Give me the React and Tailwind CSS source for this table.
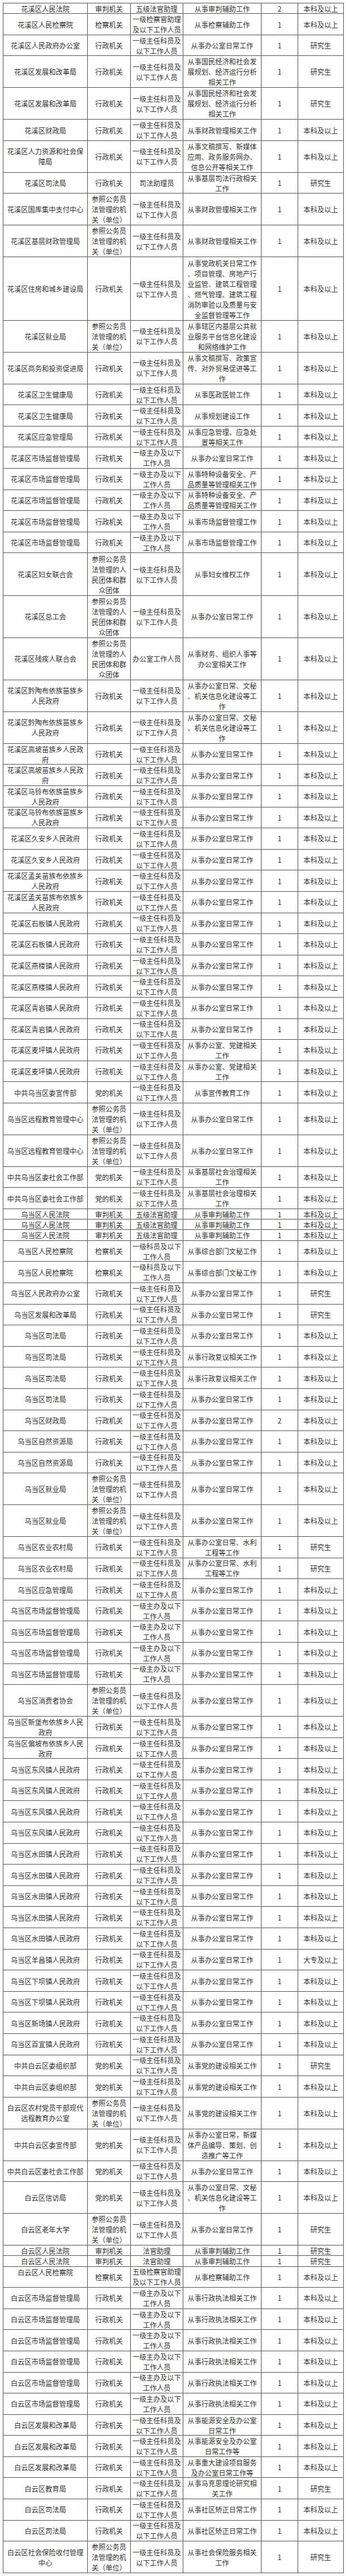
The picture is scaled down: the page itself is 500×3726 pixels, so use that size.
const A = '一级主任科员及|以下工作人员';
const B = '一级主办及以下|工作人员';
const P = '参照公务员|法管理的机|关（单位）';
const Q = '参照公务员|法管理的人|民团体和群|众团体';
const X = '行政机关';
const D = '党的机关';
const BK = '本科及以上';
const YJ = '研究生';
const BG = '从事办公室日常工作';

const rep = (n, row) => Array.from({ length: n }, () => row);

const rows = [
  ['花溪区人民法院', '审判机关', '五级法官助理', '从事审判辅助工作', '2', BK],
  ['花溪区人民检察院', '检察机关', '一级检察官助理|及以下工作人员', '从事检察辅助工作', '1', BK],
  ['花溪区人民政府办公室', X, A, BG, '1', YJ],
  ...rep(2, ['花溪区发展和改革局', X, A, '从事国民经济和社会发|展规划、经济运行分析|相关工作', '1', YJ]),
  ['花溪区财政局', X, A, '从事财政管理相关工作', '1', BK],
  ['花溪区人力资源和社会保|障局', X, A, '从事文稿撰写、新媒体|应用、政务服务网办、|信息公开等相关工作', '1', BK],
  ['花溪区司法局', X, '司法助理员', '从事基层司法行政相关|工作', '1', YJ],
  ['花溪区国库集中支付中心', P, A, '从事财政管理相关工作', '1', BK],
  ['花溪区基层财政管理局', P, A, '从事财政管理相关工作', '1', BK],
  ['花溪区住房和城乡建设局', X, A, '从事党政机关日常工作|、项目管理、房地产行|业监管、建筑工程管理|、燃气管理、建筑工程|消防审验以及质量与安|全监督管理等工作', '1', BK],
  ['花溪区就业局', P, A, '从事辖区内基层公共就|业服务平台信息化建设|和网络维护工作', '1', BK],
  ['花溪区商务和投资促进局', X, A, '从事文稿撰写、政策宣|传、对外贸易促进等工|作', '1', BK],
  ['花溪区卫生健康局', X, A, '从事医政医管工作', '1', BK],
  ['花溪区卫生健康局', X, A, '从事规划建设工作', '1', BK],
  ['花溪区应急管理局', X, A, '从事应急管理、应急处|置等相关工作', '1', BK],
  ['花溪区市场监督管理局', X, B, BG, '1', BK],
  ...rep(2, ['花溪区市场监督管理局', X, B, '从事特种设备安全、产|品质量等管理相关工作', '1', BK]),
  ...rep(2, ['花溪区市场监督管理局', X, B, '从事市场监督管理工作', '1', BK]),
  ['花溪区妇女联合会', Q, A, '从事妇女维权工作', '1', BK],
  ['花溪区总工会', Q, A, BG, '1', BK],
  ['花溪区残疾人联合会', Q, '办公室工作人员', '从事财务、组织人事等|办公室相关工作', '1', BK],
  ...rep(2, ['花溪区黔陶布依族苗族乡|人民政府', X, A, '从事办公室日常、文秘|、机关信息化建设等工|作', '1', BK]),
  ...rep(2, ['花溪区高坡苗族乡人民政|府', X, A, BG, '1', BK]),
  ...rep(2, ['花溪区马铃布依族苗族乡|人民政府', X, A, BG, '1', BK]),
  ...rep(2, ['花溪区久安乡人民政府', X, A, BG, '1', BK]),
  ...rep(2, ['花溪区孟关苗族布依族乡|人民政府', X, A, BG, '1', BK]),
  ...rep(2, ['花溪区石板镇人民政府', X, A, BG, '1', BK]),
  ...rep(2, ['花溪区燕楼镇人民政府', X, A, BG, '1', BK]),
  ...rep(2, ['花溪区青岩镇人民政府', X, A, BG, '1', BK]),
  ...rep(2, ['花溪区麦坪镇人民政府', X, A, '从事办公室、党建相关|工作', '1', BK]),
  ['中共乌当区委宣传部', D, A, '从事宣传教育工作', '1', BK],
  ...rep(2, ['乌当区远程教育管理中心', P, A, BG, '1', BK]),
  ...rep(2, ['中共乌当区委社会工作部', D, A, '从事基层社会治理相关|工作', '1', BK]),
  ...rep(3, ['乌当区人民法院', '审判机关', '五级法官助理', '从事审判辅助工作', '1', BK]),
  ...rep(2, ['乌当区人民检察院', '检察机关', '一级科员及以下|工作人员', '从事综合部门文秘工作', '1', BK]),
  ['乌当区人民政府办公室', X, A, BG, '1', YJ],
  ['乌当区发展和改革局', X, A, BG, '1', YJ],
  ['乌当区司法局', X, A, BG, '1', BK],
  ...rep(2, ['乌当区司法局', X, A, '从事行政复议相关工作', '1', BK]),
  ['乌当区司法局', X, A, BG, '1', BK],
  ['乌当区财政局', X, A, BG, '2', BK],
  ...rep(2, ['乌当区自然资源局', X, A, BG, '1', BK]),
  ...rep(2, ['乌当区就业局', P, A, BG, '1', BK]),
  ...rep(2, ['乌当区农业农村局', X, A, '从事办公室日常、水利|工程等工作', '1', YJ]),
  ['乌当区应急管理局', X, A, BG, '1', BK],
  ...rep(4, ['乌当区市场监督管理局', X, B, BG, '1', BK]),
  ['乌当区消费者协会', P, A, BG, '1', BK],
  ['乌当区新堡布依族乡人民|政府', X, A, BG, '1', BK],
  ['乌当区偏坡布依族乡人民|政府', X, A, BG, '1', BK],
  ...rep(4, ['乌当区东风镇人民政府', X, A, BG, '1', BK]),
  ...rep(5, ['乌当区水田镇人民政府', X, A, BG, '1', BK]),
  ['乌当区羊昌镇人民政府', X, A, BG, '1', '大专及以上'],
  ...rep(2, ['乌当区下坝镇人民政府', X, A, BG, '1', BK]),
  ['乌当区新场镇人民政府', X, A, BG, '1', BK],
  ['乌当区百宜镇人民政府', X, A, BG, '1', BK],
  ['中共白云区委组织部', D, A, '从事党的建设相关工作', '1', YJ],
  ['中共白云区委组织部', D, A, '从事党的建设相关工作', '1', BK],
  ['白云区农村党员干部现代|远程教育办公室', P, A, '从事党的建设相关工作', '1', BK],
  ['中共白云区委宣传部', D, A, '从事办公室日常，新媒|体产品编导、策划、创|造推广等工作', '1', BK],
  ['中共白云区委社会工作部', D, A, BG, '1', BK],
  ['白云区信访局', D, A, '从事办公室日常、文秘|、机关信息化建设等工|作', '1', BK],
  ['白云区老年大学', P, A, BG, '1', YJ],
  ...rep(2, ['白云区人民法院', '审判机关', '法官助理', '从事审判辅助工作', '1', YJ]),
  ['白云区人民检察院', '检察机关', '五级检察官助理|及以下工作人员', '从事检察辅助工作', '1', BK, 'top'],
  ...rep(6, ['白云区市场监督管理局', X, B, '从事行政执法相关工作', '1', BK]),
  ['白云区发展和改革局', X, A, '从事能源安全及办公室|日常工作', '1', BK],
  ['白云区发展和改革局', X, A, '从事能源安全及办公室|日常工作等', '1', BK],
  ['白云区发展和改革局', X, A, '从事重大建设项目服务|及办公室日常工作等', '1', BK],
  ['白云区教育局', X, A, '从事马克思理论研究相|关工作', '1', YJ],
  ...rep(2, ['白云区司法局', X, A, '从事社区矫正日常工作', '1', BK]),
  ['白云区社会保险收付管理|中心', P, A, '从事社会保险服务相关|工作', '1', YJ],
];

const HEIGHTS = {
  1: 'h-[15.3px]',
  2: 'h-[30.6px]',
  3: 'h-[45.9px]',
  4: 'h-[61.2px]',
  6: 'h-[91.8px]',
};

const WIDTHS = ['w-[122px]', 'w-[62px]', 'w-[76px]', 'w-[113px]', 'w-[53px]', 'w-[66px]'];

function Cell({ text, width, top }) {
  return (
    <div
      className={`${width} shrink-0 border-r border-[#6e6e6e] flex flex-col items-center ${
        top ? 'justify-start' : 'justify-center'
      } overflow-hidden`}
    >
      {text.split('|').map((line, i) => (
        <div key={i} className="whitespace-nowrap leading-[15px] text-center">
          {line}
        </div>
      ))}
    </div>
  );
}

export default function App() {
  return (
    <div className="bg-white w-[500px] min-h-[3726px] pt-[4px]">
      <div
        className="ml-[4px] w-[493px] border-l border-t border-[#6e6e6e] text-[10px] text-[#333333]"
        style={{ fontFamily: '"Noto Sans CJK SC", "Noto Sans", sans-serif' }}
      >
        {rows.map((r, i) => {
          const lines = Math.max(...r.slice(0, 6).map((c) => c.split('|').length));
          return (
            <div key={i} className={`flex ${HEIGHTS[lines]} border-b border-[#6e6e6e]`}>
              {r.slice(0, 6).map((c, j) => (
                <Cell key={j} text={c} width={WIDTHS[j]} top={j === 0 && r[6] === 'top'} />
              ))}
            </div>
          );
        })}
      </div>
    </div>
  );
}
